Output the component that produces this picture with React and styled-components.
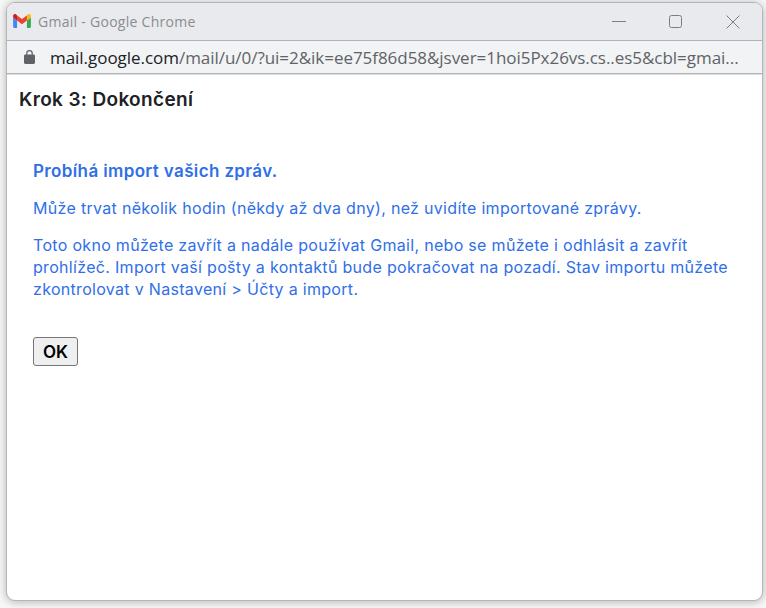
import React from "react";
import styled, { createGlobalStyle } from "styled-components";

const Global = createGlobalStyle`
  html, body {
    margin: 0;
    width: 766px;
    height: 608px;
    overflow: hidden;
    background: #f7f7f7;
  }
`;

const Desktop = styled.div`
  box-sizing: border-box;
  width: 766px;
  height: 608px;
  padding: 2px 3px 7px 6px;
`;

const Window = styled.div`
  box-sizing: border-box;
  height: 100%;
  display: flex;
  flex-direction: column;
  border: 1px solid #b4b5b6;
  border-radius: 9px;
  overflow: hidden;
  background: #fff;
  box-shadow: 0 1px 8px rgba(0, 0, 0, 0.28);
`;

const TitleBar = styled.div`
  flex: none;
  height: 37px;
  display: flex;
  align-items: center;
  padding-left: 6px;
  background: #e8eaed;
  border-bottom: 1px solid #b3b4b6;
`;

const Logo = styled.svg`
  margin-bottom: 1px;
`;

const Title = styled.span`
  margin-left: 7px;
  font: 14px "Open Sans", sans-serif;
  color: #8b8d90;
  letter-spacing: 0.28px;
`;

const WindowButtons = styled.div`
  margin-left: auto;
  padding-right: 1px;
  display: flex;
  color: #7c7e81;
`;

const WindowButton = styled.div`
  width: 57px;
  height: 37px;
  display: flex;
  align-items: center;
  justify-content: center;
`;

const AddressBar = styled.div`
  flex: none;
  height: 32px;
  display: flex;
  align-items: center;
  padding-left: 17px;
  background: #f1f3f4;
  border-bottom: 1px solid #b3b4b6;
`;

const Url = styled.div`
  margin-left: 15px;
  font: 17px "Open Sans", sans-serif;
  color: #5f6368;
  white-space: nowrap;
  letter-spacing: -0.04px;
`;

const Host = styled.span`
  color: #202124;
`;

const Page = styled.div`
  flex: 1;
  border-top: 1px solid #dedede;
  padding: 14px 12px;
  font-family: "Inter", sans-serif;
`;

const Heading = styled.h3`
  margin: 0;
  font-size: 19px;
  line-height: 21px;
  font-weight: 600;
  color: #202124;
  letter-spacing: 0.35px;
`;

const Content = styled.div`
  padding: 50px 14px 0;
  color: #2f6fe8;
  font-size: 16px;
  line-height: 22px;
  letter-spacing: 0.31px;
`;

const Lead = styled.p`
  margin: 0 0 15px;
  font-size: 17px;
  font-weight: 600;
  letter-spacing: 0.37px;
`;

const Text = styled.p`
  margin: 0 0 15px;
`;

const OkButton = styled.button`
  display: block;
  margin-top: 37px;
  width: 45px;
  height: 29px;
  padding: 0;
  background: #efefef;
  border: 1px solid #767676;
  border-radius: 3px;
  color: #000;
  font: 600 17px "Inter", sans-serif;
`;

function GmailIcon() {
  return (
    <Logo width="18" height="14" viewBox="0 0 19 15">
      <path d="M1.3 15H4.2V7L0 3.8V13.7C0 14.4.6 15 1.3 15Z" fill="#4285f4" />
      <path d="M14.8 15H17.7C18.4 15 19 14.4 19 13.7V3.8L14.8 7Z" fill="#34a853" />
      <path d="M14.8 1.5V7L19 3.8V2C19 .4 17.2-.5 15.9.4Z" fill="#fbbc04" />
      <path d="M4.2 7V1.5L9.5 5.4 14.8 1.5V7L9.5 11Z" fill="#ea4335" />
      <path d="M0 2V3.8L4.2 7V1.5L3.1.4C1.8-.5 0 .4 0 2Z" fill="#c5221f" />
    </Logo>
  );
}

function LockIcon() {
  return (
    <svg width="11" height="14" viewBox="0 0 11 14" fill="#5f6368">
      <path d="M1.4 4.6H2.2V3.3A3.3 3.3 0 0 1 8.8 3.3V4.6H9.6C10.4 4.6 11 5.2 11 6V12.6C11 13.4 10.4 14 9.6 14H1.4C.6 14 0 13.4 0 12.6V6C0 5.2.6 4.6 1.4 4.6ZM3.4 4.6H7.6V3.3A2.1 2.1 0 0 0 3.4 3.3Z" />
    </svg>
  );
}

export default function App() {
  return (
    <>
      <Global />
      <Desktop>
        <Window>
          <TitleBar>
            <GmailIcon />
            <Title>Gmail - Google Chrome</Title>
            <WindowButtons>
              <WindowButton>
                <svg width="14" height="14" viewBox="0 0 14 14" stroke="currentColor" fill="none">
                  <path d="M0 6.5H14" />
                </svg>
              </WindowButton>
              <WindowButton>
                <svg width="14" height="14" viewBox="0 0 14 14" stroke="currentColor" fill="none">
                  <rect x=".5" y=".5" width="12" height="12" rx="2" />
                </svg>
              </WindowButton>
              <WindowButton>
                <svg width="14" height="14" viewBox="0 0 14 14" stroke="currentColor" fill="none">
                  <path d="M.5.5 13.5 13.5M13.5.5 .5 13.5" />
                </svg>
              </WindowButton>
            </WindowButtons>
          </TitleBar>
          <AddressBar>
            <LockIcon />
            <Url>
              <Host>mail.google.com</Host>/mail/u/0/?ui=2&amp;ik=ee75f86d58&amp;jsver=1hoi5Px26vs.cs..es5&amp;cbl=gmai...
            </Url>
          </AddressBar>
          <Page>
            <Heading>Krok 3: Dokončení</Heading>
            <Content>
              <Lead>Probíhá import vašich zpráv.</Lead>
              <Text>Může trvat několik hodin (někdy až dva dny), než uvidíte importované zprávy.</Text>
              <Text>
                Toto okno můžete zavřít a nadále používat Gmail, nebo se můžete i odhlásit a zavřít prohlížeč. Import
                vaší pošty a kontaktů bude pokračovat na pozadí. Stav importu můžete zkontrolovat v Nastavení &gt; Účty
                a import.
              </Text>
              <OkButton>OK</OkButton>
            </Content>
          </Page>
        </Window>
      </Desktop>
    </>
  );
}
